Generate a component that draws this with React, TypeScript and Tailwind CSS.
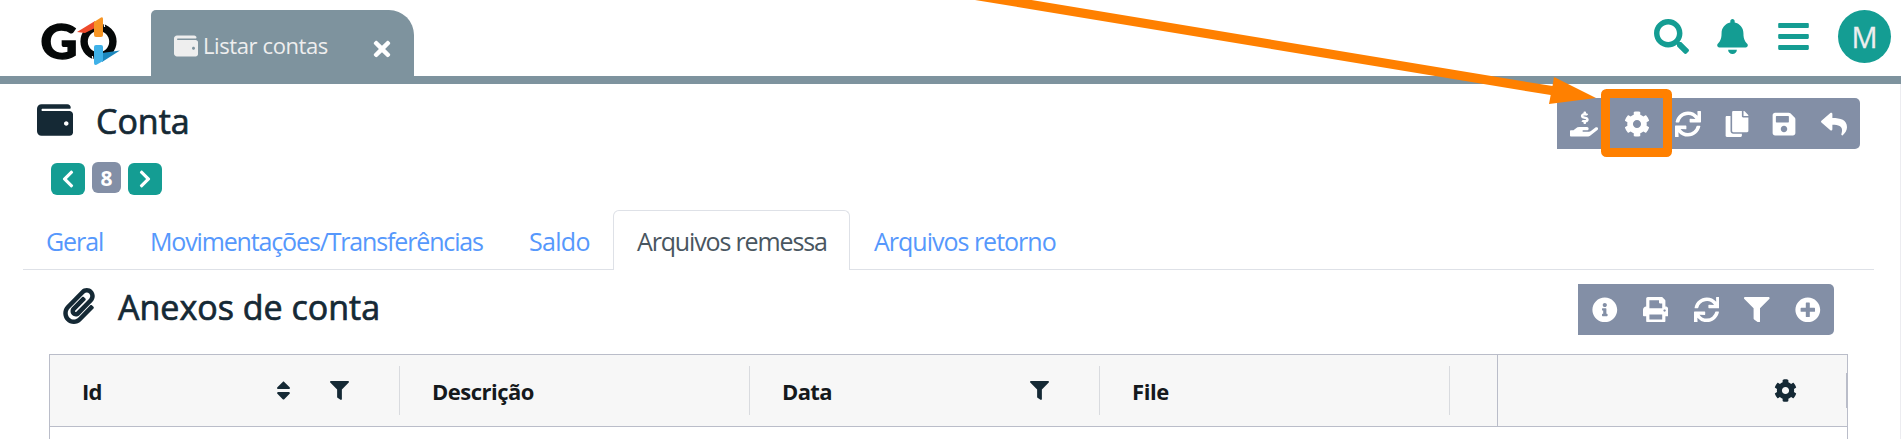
import {
  FaWallet, FaTimes, FaSearch, FaBell, FaBars, FaHandHoldingUsd, FaCog, FaSync, FaCopy, FaSave,
  FaReply, FaChevronLeft, FaChevronRight, FaPaperclip, FaInfoCircle, FaPrint, FaFilter,
  FaPlusCircle, FaSort,
} from "react-icons/fa";

function Logo() {
  return (
    <svg width="90" height="66" viewBox="-10 -5 90 66" className="ml-[31px] mt-[10px] shrink-0">
      <text x="-0.5" y="43.6" fontSize="48" fontWeight="900" fontFamily="Lato, sans-serif" fill="#050808" stroke="#050808" strokeWidth="1.4" textLength="37" lengthAdjust="spacingAndGlyphs">G</text>
      <circle cx="57.5" cy="26.6" r="14.4" fill="none" stroke="#050808" strokeWidth="7.4" />
      <path d="M36 17 L54 6 L54 13 L44 18 Z" fill="#ee4a2b" />
      <path d="M53 7 L60 2.5 Q62 1.5 62 4 V20 Q62 22 60 22 H55 Q53 22 53 20 Z" fill="#f79524" />
      <path d="M61 38 L79 35.5 L61 47 Z" fill="#1c87bd" />
      <path d="M53 32 Q53 30 55 30 H60 Q62 30 62 32 V46 L55.5 49.8 Q53 50.5 53 48 Z" fill="#3fb1e8" />
      <path d="M62.9 7 L63.6 12 M52.3 46 L51.4 41" stroke="#fff" strokeWidth="1.2" />
    </svg>
  );
}

function Header() {
  return (
    <header className="flex h-[84px] border-b-8 border-[#7e939e]">
      <Logo />
      <div className="ml-[30px] mt-[10px] flex h-[66px] w-[263px] rounded-tl-[5px] rounded-tr-[25px] bg-[#7e939e] pl-[23px] text-[#eee]">
        <FaWallet className="mt-[23.5px] size-[24px]" />
        <span className="ml-[5px] mt-[17px] w-[167px] text-[22px] leading-[36px] tracking-[-0.4px] whitespace-nowrap">Listar contas</span>
        <FaTimes className="mt-[26.5px] size-[24px] text-white" />
      </div>
      <div className="ml-auto mr-[10px] flex text-[#149d93]">
        <FaSearch className="mt-[19px] size-[35px]" />
        <FaBell className="ml-[26px] mt-[19px] size-[35px]" />
        <FaBars className="ml-[26px] mt-[19px] size-[35px]" />
        <div className="ml-[27px] mt-[10px] flex size-[53px] items-center justify-center rounded-full bg-[#149d93] text-[29px] text-[#eee] [-webkit-text-stroke:0.3px]">M</div>
      </div>
    </header>
  );
}

const tabs = [
  { label: "Geral", box: "w-[103px] pl-[23px] pt-px", text: "tracking-[-1.1px]" },
  { label: "Movimentações/Transferências", box: "w-[380px] pl-[24px] pt-px", text: "tracking-[-1.15px]" },
  { label: "Saldo", box: "w-[107px] pl-[23px] pt-px", text: "tracking-[-0.7px]" },
  { label: "Arquivos remessa", box: "w-[237px] pl-[23px]", text: "tracking-[-1.15px]", active: true },
  { label: "Arquivos retorno", box: "w-[230px] pl-[24px] pt-px", text: "tracking-[-1px]" },
];

export default function App() {
  return (
    <div className="relative h-[439px] w-[1901px] overflow-hidden bg-white font-['Open_Sans','Noto_Sans',sans-serif] text-[#152935]">
      <Header />
      <main className="h-[355px] border-r border-[#ececf0]">
        <div className="flex h-[78px]">
          <FaWallet className="ml-[37px] mt-[17.5px] size-[36px]" />
          <h1 className="ml-[23px] mt-[14px] text-[34px] leading-[46px] [-webkit-text-stroke:0.7px]">Conta</h1>
          <div className="ml-auto mr-[40px] mt-[14px] flex h-[51px] w-[303px] items-center rounded-r-[5px] bg-[#838fa6] text-white">
            <FaHandHoldingUsd className="ml-[13px] size-[28px]" />
            <FaCog className="ml-[26px] size-[26px]" />
            <FaSync className="ml-[25px] size-[26px]" />
            <FaCopy className="ml-[23px] size-[26px]" />
            <FaSave className="ml-[21px] size-[26px]" />
            <FaReply className="ml-[24px] size-[26px]" />
          </div>
        </div>
        <div className="flex h-[48px] pl-[51px] text-white">
          <button className="mt-px flex h-8 w-[34px] items-center justify-center rounded-[6px] bg-[#149d93]"><FaChevronLeft className="size-[20px]" /></button>
          <span className="ml-[7px] flex h-[31px] w-[29px] items-center justify-center rounded-[6px] bg-[#838fa6] pt-[2px] text-[21px] font-bold">8</span>
          <button className="ml-[7px] mt-px flex h-8 w-[34px] items-center justify-center rounded-[6px] bg-[#149d93]"><FaChevronRight className="size-[20px]" /></button>
        </div>
        <nav className="ml-[23px] mr-[26px] flex h-[60px] border-b border-[#dee1e7] text-[25px] leading-[60px] whitespace-nowrap text-[#5698fc]">
          {tabs.map((t) => (
            <div key={t.label} className={`${t.box} ${t.active ? "h-[60px] rounded-t-[6px] border border-b-0 border-[#dee1e7] bg-white text-[#495660]" : ""}`}>
              <span className={t.text}>{t.label}</span>
            </div>
          ))}
        </nav>
        <div className="flex h-[84px]">
          <FaPaperclip className="ml-[61px] mt-[18px] size-[36px]" />
          <h2 className="ml-[21px] mt-[14px] text-[34px] leading-[46px] [-webkit-text-stroke:0.7px]">Anexos de conta</h2>
          <div className="ml-auto mr-[66px] mt-[14px] flex h-[51px] w-[256px] items-center gap-[25.2px] rounded-r-[5px] bg-[#838fa6] pl-[14px] text-white">
            <FaInfoCircle className="size-[25.6px]" />
            <FaPrint className="size-[25.6px]" />
            <FaSync className="size-[25.6px]" />
            <FaFilter className="size-[25.6px]" />
            <FaPlusCircle className="size-[25.6px]" />
          </div>
        </div>
        <section className="ml-[49px] mr-[52px] h-[86px] border border-b-0 border-[#babdc9]">
          <div className="flex h-[72px] items-center border-b border-[#babdc9] bg-[#f7f7f7] text-[22px] font-bold text-[#15191c]">
            <div className="flex h-[49px] w-[350px] items-center border-r border-[#d9dbdf] pl-8">
              <span className="w-[190px] pt-[2px] tracking-[-0.8px]">Id</span>
              <FaSort className="size-[23px]" color="#152935" />
              <FaFilter className="ml-[35px] size-[19px] text-[#152935]" />
            </div>
            <div className="flex h-[49px] w-[350px] items-center border-r border-[#d9dbdf] pt-[2px] pl-[32px] tracking-[-0.5px]">Descrição</div>
            <div className="flex h-[49px] w-[350px] items-center border-r border-[#d9dbdf] pl-[32px]">
              <span className="w-[248px] pt-[2px] tracking-[-0.6px]">Data</span>
              <FaFilter className="size-[19px] text-[#152935]" />
            </div>
            <div className="flex h-[49px] w-[350px] items-center border-r border-[#d9dbdf] pt-[2px] pl-[32px] tracking-[-0.4px]">File</div>
            <div className="h-full w-[48px] border-r border-[#babdc9]" />
            <div className="flex h-full flex-1 items-center justify-end">
              <FaCog className="mr-[49px] size-[23px] text-[#152935]" />
              <div className="h-[35px] w-px bg-[#babdc9]" />
            </div>
          </div>
        </section>
      </main>
      <svg width="1901" height="160" viewBox="0 0 1901 160" className="pointer-events-none absolute top-0 left-0">
        <path d="M975 0 H1031.5 L1552.5 86.1 L1554 77 L1596 98 L1549 104 L1550.7 95.1 Z" fill="#ff8000" />
        <rect x="1605.5" y="93.5" width="62" height="59" rx="1" fill="none" stroke="#ff8000" strokeWidth="9" strokeLinejoin="round" />
      </svg>
    </div>
  );
}
